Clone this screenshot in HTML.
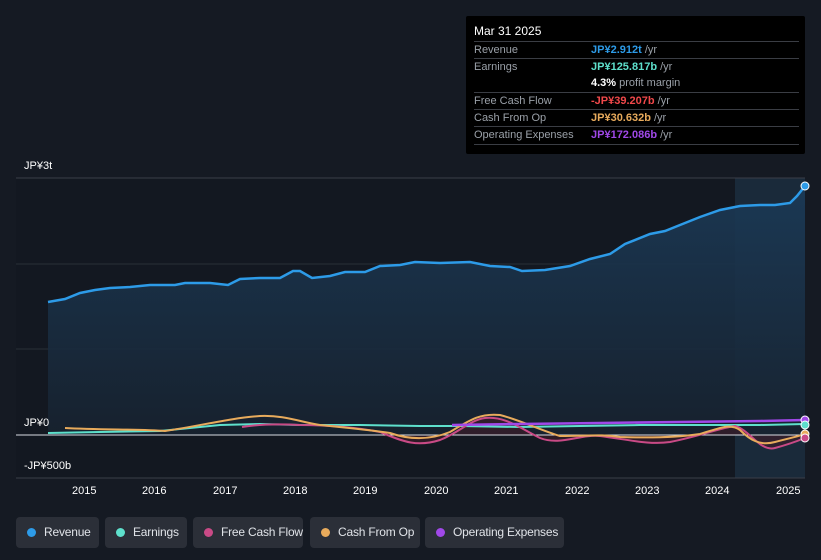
<!DOCTYPE html>
<html><head><meta charset="utf-8"><style>
html,body{margin:0;width:821px;height:560px;overflow:hidden}
body{background:#151a23;font-family:"Liberation Sans",sans-serif;position:relative}
.tt{position:absolute;left:466px;top:16px;width:339px;height:138px;background:#000;border-radius:2px}
.tt .h{position:absolute;left:8px;top:8px;color:#fff;font-size:12px}
.row{position:absolute;left:8px;width:325px;border-top:1px solid #3a3d44;font-size:11px;color:#9aa0a8;height:17px;line-height:17px}
.row span.v{position:absolute;left:117px;font-weight:bold}
.row span.u{color:#9aa0a8;font-weight:normal}
.lg{position:absolute;top:517px;height:31px;background:#2b2f38;border-radius:4px;color:#e0e3e8;font-size:12px;line-height:31px;box-sizing:border-box;padding-left:28px;white-space:nowrap;letter-spacing:-0.2px}
.lg:before{content:"";position:absolute;left:11px;top:11px;width:9px;height:9px;border-radius:50%;background:var(--c)}
.ax{position:absolute;color:#fff;font-size:11px}
</style></head><body>
<svg width="821" height="560" style="position:absolute;left:0;top:0">
<defs><linearGradient id="g" x1="0" y1="0" x2="0" y2="1"><stop offset="0" stop-color="#1b3a57"/><stop offset="1" stop-color="#17222f"/></linearGradient></defs>
<rect x="16" y="178" width="789" height="300" fill="#131821"/>
<rect x="735" y="178" width="70" height="300" fill="#1a2a3a"/>
<line x1="16" y1="178" x2="805" y2="178" stroke="#3a3f48"/>
<line x1="16" y1="264" x2="805" y2="264" stroke="#2a2f38"/>
<line x1="16" y1="349" x2="805" y2="349" stroke="#2a2f38"/>
<line x1="16" y1="478" x2="805" y2="478" stroke="#3a3f48"/>
<path d="M48,302 L65,299 80,293 95,290 110,288 130,287 150,285 175,285 185,283 210,283 228,285 240,279 260,278 280,278 293,271 300,271 312,278 330,276 345,272 365,272 380,266 400,265 415,262 440,263 470,262 490,266 510,267 522,271 545,270 570,266 590,259 610,254 625,244 650,234 665,231 680,225 700,217 720,210 740,206 760,205 775,205 790,203 797,196 805,186 L805,435 L48,435Z" fill="url(#g)" opacity="0.9"/>
<path d="M48,302 L65,299 80,293 95,290 110,288 130,287 150,285 175,285 185,283 210,283 228,285 240,279 260,278 280,278 293,271 300,271 312,278 330,276 345,272 365,272 380,266 400,265 415,262 440,263 470,262 490,266 510,267 522,271 545,270 570,266 590,259 610,254 625,244 650,234 665,231 680,225 700,217 720,210 740,206 760,205 775,205 790,203 797,196 805,186" fill="none" stroke="#2d9be8" stroke-width="2.5"/>
<path d="M380,435 C400,440 415,448 440,440 C460,432 470,420 485,418 C505,416 520,428 540,438 C560,446 580,434 600,436 C630,440 650,445 670,442 C700,436 720,428 735,426 C750,430 760,452 775,448 C790,444 800,440 805,438 L805,435Z" fill="#3a1d2a" opacity="0.7"/>
<line x1="16" y1="435" x2="805" y2="435" stroke="#d8dce2" stroke-width="1"/>
<path d="M48,433 L100,432 160,431 220,425 260,424 300,425 360,425 420,426 460,426 520,427 580,426 640,425 700,425 760,425 805,424" fill="none" stroke="#5ee0cc" stroke-width="2"/>
<path d="M242,427 C260,424 280,424 300,425 C330,425 360,428 380,432 C400,440 415,448 440,440 C460,432 470,420 485,418 C505,416 520,428 540,438 C560,446 580,434 600,436 C630,440 650,445 670,442 C700,436 720,428 735,426 C750,430 760,452 775,448 C790,444 800,440 805,438" fill="none" stroke="#c94a86" stroke-width="2"/>
<path d="M65,428 C100,430 140,429 165,431 C200,426 230,418 260,416 C285,415 300,422 320,425 C350,428 370,430 390,433 C410,440 430,440 450,432 C470,420 480,413 500,415 C520,420 540,430 560,436 C590,436 600,434 620,437 C650,438 680,437 700,434 C720,428 730,423 740,430 C750,440 760,446 775,442 C790,438 800,436 805,434" fill="none" stroke="#e8ab5c" stroke-width="2"/>
<path d="M452,425 L520,424 600,423 680,422 760,421 805,420" fill="none" stroke="#a048e8" stroke-width="2.5"/>
<circle cx="805" cy="186" r="4" fill="#2d9be8" stroke="#fff" stroke-width="1"/>
<circle cx="805" cy="420" r="4" fill="#a048e8" stroke="#fff" stroke-width="1"/>
<circle cx="805" cy="425" r="4" fill="#5ee0cc" stroke="#fff" stroke-width="1"/>
<circle cx="805" cy="434" r="4" fill="#e8ab5c" stroke="#fff" stroke-width="1"/>
<circle cx="805" cy="438" r="4" fill="#c94a86" stroke="#fff" stroke-width="1"/>
</svg>
<div class="ax" style="left:24px;top:160px">JP¥3t</div>
<div class="ax" style="left:24px;top:417px">JP¥0</div>
<div class="ax" style="left:24px;top:460px">-JP¥500b</div>
<div class="ax" style="left:72px;top:485px">2015</div><div class="ax" style="left:142px;top:485px">2016</div><div class="ax" style="left:213px;top:485px">2017</div><div class="ax" style="left:283px;top:485px">2018</div><div class="ax" style="left:353px;top:485px">2019</div><div class="ax" style="left:424px;top:485px">2020</div><div class="ax" style="left:494px;top:485px">2021</div><div class="ax" style="left:565px;top:485px">2022</div><div class="ax" style="left:635px;top:485px">2023</div><div class="ax" style="left:705px;top:485px">2024</div><div class="ax" style="left:776px;top:485px">2025</div>
<div class="tt"><div class="h">Mar 31 2025</div>
<div class="row" style="top:25px">Revenue<span class="v" style="color:#2d9be8">JP¥2.912t <span class="u">/yr</span></span></div>
<div class="row" style="top:42px">Earnings<span class="v" style="color:#5ee0cc">JP¥125.817b <span class="u">/yr</span></span></div>
<div class="row" style="top:59px;border-top:none"><span class="v" style="color:#fff">4.3% <span class="u">profit margin</span></span></div>
<div class="row" style="top:76px">Free Cash Flow<span class="v" style="color:#f0484a">-JP¥39.207b <span class="u">/yr</span></span></div>
<div class="row" style="top:93px">Cash From Op<span class="v" style="color:#e8ab5c">JP¥30.632b <span class="u">/yr</span></span></div>
<div class="row" style="top:110px;border-bottom:1px solid #3a3d44">Operating Expenses<span class="v" style="color:#a048e8">JP¥172.086b <span class="u">/yr</span></span></div>
</div>
<div class="lg" style="left:16px;width:83px;--c:#2d9be8">Revenue</div>
<div class="lg" style="left:105px;width:82px;--c:#5ee0cc">Earnings</div>
<div class="lg" style="left:193px;width:110px;--c:#c94a86">Free Cash Flow</div>
<div class="lg" style="left:310px;width:110px;--c:#e8ab5c">Cash From Op</div>
<div class="lg" style="left:425px;width:139px;--c:#a048e8">Operating Expenses</div>
</body></html>
